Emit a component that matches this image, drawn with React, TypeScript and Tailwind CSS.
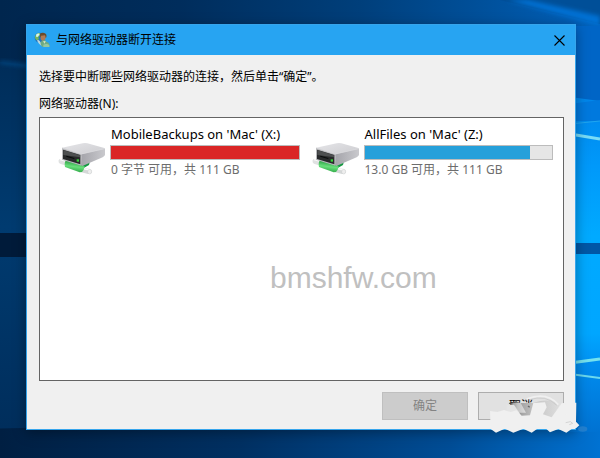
import { useState } from 'react';

interface Drive {
  name: string;
  info: string;
  used: number;
  full: boolean;
}

const drives: Drive[] = [
  { name: "MobileBackups on 'Mac' (X:)", info: '0 字节 可用，共 111 GB', used: 100, full: true },
  { name: "AllFiles on 'Mac' (Z:)", info: '13.0 GB 可用，共 111 GB', used: 88, full: false },
];

const Wallpaper = () => (
  <svg
    className="absolute inset-0 h-full w-full"
    viewBox="0 0 600 458"
    preserveAspectRatio="none"
    aria-hidden="true"
  >
    <defs>
      <linearGradient id="sky" x1="0" x2="1" y1="0" y2="0">
        <stop offset="0" stopColor="#00264e" />
        <stop offset="0.3" stopColor="#002d5c" />
        <stop offset="0.6" stopColor="#003f7b" />
        <stop offset="0.85" stopColor="#0054a2" />
        <stop offset="1" stopColor="#0062bd" />
      </linearGradient>
      <linearGradient id="ground" x1="0" x2="1" y1="0" y2="0">
        <stop offset="0" stopColor="#001f42" />
        <stop offset="0.4" stopColor="#003062" />
        <stop offset="0.75" stopColor="#004d96" />
        <stop offset="1" stopColor="#0072d2" />
      </linearGradient>
      <linearGradient id="left" x1="0" x2="0" y1="0" y2="1">
        <stop offset="0" stopColor="#002d59" />
        <stop offset="0.45" stopColor="#003b70" />
        <stop offset="1" stopColor="#002e5c" />
      </linearGradient>
      <linearGradient id="right" x1="0" x2="0" y1="0" y2="1">
        <stop offset="0" stopColor="#0086ea" />
        <stop offset="0.25" stopColor="#0099fa" />
        <stop offset="0.5" stopColor="#00aaff" />
        <stop offset="0.85" stopColor="#00a6ff" />
        <stop offset="1" stopColor="#008bef" />
      </linearGradient>
      <linearGradient id="corner" x1="0" x2="0" y1="0" y2="1">
        <stop offset="0" stopColor="#008ff1" />
        <stop offset="1" stopColor="#0072d2" />
      </linearGradient>
      <filter id="soft" x="-20%" y="-50%" width="140%" height="200%">
        <feGaussianBlur stdDeviation="2" />
      </filter>
    </defs>
    <rect width="600" height="458" fill="url(#sky)" />
    <path d="M500 0 L600 0 L600 24 Z" fill="#004f98" />
    <path d="M508 0 L528 0 L600 16 L600 26 Z" fill="#0071d4" filter="url(#soft)" />
    <path d="M0 62 L60 68 V428 H0 Z" fill="url(#left)" />
    <path d="M0 62 L60 70" stroke="#07569a" strokeWidth="2" filter="url(#soft)" />
    <path d="M570 26 H600 V110 H570 Z" fill="#0065c6" />
    <path d="M570 97 L600 101 V375 L570 370 Z" fill="url(#right)" />
    <path d="M570 104 L600 100 V121 H570 Z" fill="#0079de" />
    <path d="M570 124 L600 121" stroke="#20a5ef" />
    <path d="M570 134 L600 139" stroke="#78dcf7" strokeWidth="3" />
    <rect y="233" width="60" height="24" fill="#001b3a" />
    <rect x="550" y="243" width="50" height="11" fill="#0057a6" />
    <path d="M0 429 L150 422 H600 V458 H0 Z" fill="url(#ground)" />
    <path d="M570 364 L600 359 V432 H570 Z" fill="url(#corner)" />
    <path d="M570 363 L600 359" stroke="#75e2ee" strokeWidth="3" />
    <path d="M570 374 L600 378" stroke="#6cd9ee" strokeWidth="2" />
  </svg>
);

const NetworkUserIcon = () => (
  <svg className="h-4 w-4" viewBox="0 0 48 48" aria-hidden="true">
    <circle cx="17" cy="17" r="15" fill="#2475bb" />
    <path d="M3 14 C5 6 11 2 17 3 L20 9 L13 15 L15 22 L9 25 C5 23 3 19 3 14 Z" fill="#77b85d" />
    <path d="M6 8 C10 4 14 4 17 6 L12 14 L7 15 Z" fill="#d9f3ed" />
    <path d="M13 24 C20 27 20 36 28 38 L25 42 C16 39 12 32 9 25 Z" fill="#b9d7df" />
    <path d="M18 12 C16 3 24 0 30 3 C38 4 39 12 36 18 L31 15 L20 17 Z" fill="#6b4b2c" />
    <path d="M21 11 L33 10 C37 18 33 27 27 27 C21 26 18 20 21 11 Z" fill="#b07a55" />
    <path d="M20 30 L26 25 L34 25 L37 29 C45 31 47 36 47 45 H27 C21 43 19 37 20 30 Z" fill="#6eaa83" />
    <path d="M27 28 L32 35 L35 27 Z" fill="#d5e6c6" />
    <path d="M28 38 C34 35 43 36 46 40 V45 H28 Z" fill="#94c7a0" />
  </svg>
);

const DriveIcon = () => (
  <svg className="mb-[3px] h-[34px] w-12 shrink-0" viewBox="54 66 144 102" aria-hidden="true">
    <defs>
      <linearGradient id="lid" x1="0" x2="1" y1="0" y2="1">
        <stop offset="0" stopColor="#e5e5e8" />
        <stop offset="1" stopColor="#cbcbcf" />
      </linearGradient>
      <linearGradient id="side" x1="0" x2="1" y1="0" y2="0">
        <stop offset="0" stopColor="#a4a4aa" />
        <stop offset="1" stopColor="#c9c9cd" />
      </linearGradient>
      <linearGradient id="pipe" x1="0.2" x2="0" y1="0" y2="1">
        <stop offset="0" stopColor="#279840" />
        <stop offset="0.45" stopColor="#68df7b" />
        <stop offset="1" stopColor="#229a3b" />
      </linearGradient>
    </defs>
    <path d="M118 134 L150 124 L147 135 L130 145 Z" fill="#159842" />
    <path d="M59 117 Q54 119 56 127 Q57 131 62 132 L82 138 L86 123 Z" fill="#dfe1e1" />
    <path d="M60 119 L83 125" stroke="#fafafa" strokeWidth="4" />
    <path d="M124 143 L150 147 Q157 151 155 158 Q151 163 144 162 L121 156 Z" fill="#d5d8d8" />
    <path d="M128 146 L149 150" stroke="#fafafa" strokeWidth="4" />
    <ellipse cx="149" cy="155" rx="6" ry="7" fill="#eeeeee" stroke="#bfc1c1" />
    <path d="M78 121 Q72 128 75 141 L119 157 Q128 157 131 149 L134 138 L120 133 Z" fill="url(#pipe)" />
    <path d="M66 83 L128 70 Q135 68 142 70 L193 84 Q196 86 195 88 L124 108 Q97 99 67 88 Z" fill="url(#lid)" />
    <path d="M124 103 L195 86 V105 Q194 108 188 112 L127 138 L123 134 Z" fill="url(#side)" />
    <path d="M66 83 L124 102 V137 L120 136 L66 119 Z" fill="#b9babd" />
    <path d="M69 89 L121 105 V133 L69 117 Z" fill="#282a2b" />
    <path d="M70 90 L120 106 V112 L70 105 Z" fill="#4d4f50" />
    <path d="M79 107 L103 114 V117 L79 110 Z" fill="#090b0b" />
    <rect x="110" y="118" width="7" height="7" fill="#36d439" />
    <path d="M67 84 L124 102 L194 86" fill="none" stroke="#dddddf" strokeWidth="2" />
  </svg>
);

const DriveItem = ({ drive }: { drive: Drive }) => (
  <li className="flex items-end gap-1">
    <DriveIcon />
    <div className="min-w-0 flex-1">
      <div className="mb-0.5 h-[18px] truncate pl-px text-[13px] leading-[18px]">{drive.name}</div>
      <div className="h-[15px] border border-[#bcbcbc] bg-[#e6e6e6]">
        <div
          className={drive.full ? 'h-full bg-[#da2626]' : 'h-full bg-[#26a0da]'}
          style={{ width: `${drive.used}%` }}
        />
      </div>
      <div className="mt-px h-[18px] truncate pl-px text-xs leading-[18px] text-[#6d6d6d]">{drive.info}</div>
    </div>
  </li>
);

const Smudge = () => (
  <svg
    className="pointer-events-none absolute -right-[15px] -bottom-2 h-[43px] w-[103px]"
    viewBox="351 42 309 129"
    aria-hidden="true"
  >
    <defs>
      <filter id="smear" x="-10%" y="-10%" width="120%" height="120%">
        <feGaussianBlur stdDeviation="2" />
      </filter>
      <linearGradient id="shade" x1="0" x2="1" y1="0" y2="0">
        <stop offset="0" stopColor="#292929" />
        <stop offset="0.25" stopColor="#a2a2a2" />
        <stop offset="0.5" stopColor="#c4c4c4" />
        <stop offset="1" stopColor="#dddddd" />
      </linearGradient>
    </defs>
    <path d="M416 69 L438 64 L452 69 L490 69 Q540 52 567 75 L563 111 H455 L436 84 Z" fill="url(#shade)" filter="url(#smear)" />
    <path d="M418 69 H452 L468 98 H440 L436 84 Z" fill="url(#shade)" />
    <path d="M418 74 L432 74 L448 98 L448 108 H410 V74 Z" fill="#e4e4e4" filter="url(#smear)" />
    <path d="M470 57 Q530 34 565 74" fill="none" stroke="#f0f0f0" strokeWidth="5" />
    <path d="M476 60 Q528 42 560 76" fill="none" stroke="#c4c4c4" strokeWidth="2" />
    <path
      d="M360 93 L382 96 L402 90 L422 96 L440 91 L455 107 L480 106 L490 69 L525 67 L530 82 L519 103 L545 112 L575 70 L588 68 L586 102 L607 111 L609 68 L619 68 L618 125 L628 136 L618 145 L605 147 L589 158 L565 147 L540 157 L517 136 L485 158 L460 146 L430 158 L404 146 L378 158 L362 147 Z"
      fill="#f0f0f0"
      filter="url(#smear)"
    />
    <path d="M587 128 L601 125 L608 130 L598 134" fill="none" stroke="#c5c5c5" strokeWidth="2" />
    <path d="M474 78 L479 82" stroke="#666666" strokeWidth="4" />
    <ellipse cx="638" cy="147" rx="14" ry="8" fill="#428bcb" opacity="0.5" filter="url(#smear)" />
  </svg>
);

const App = () => {
  const [open, setOpen] = useState(true);

  return (
    <div className="relative flex min-h-screen flex-col overflow-hidden bg-[#002d5c] pt-6 pr-6 pb-7 pl-[26px] font-['Noto_Sans','Noto_Sans_CJK_SC',sans-serif] text-xs text-black">
      <Wallpaper />
      {open && (
        <div
          role="dialog"
          aria-labelledby="dialog-title"
          className="relative flex flex-1 flex-col border border-[#36a5ec] bg-[#f0f0f0] shadow-[0_3px_12px_rgba(0,0,0,0.35)]"
        >
          <header className="flex h-[30px] items-center gap-1.5 bg-[#27a4f2] pl-[7px]">
            <NetworkUserIcon />
            <h1 id="dialog-title" className="flex-1 text-xs">与网络驱动器断开连接</h1>
            <button
              type="button"
              aria-label="关闭"
              className="flex h-full w-[31px] items-center justify-center"
              onClick={() => setOpen(false)}
            >
              <svg className="h-[11px] w-[11px]" viewBox="0 0 11 11" aria-hidden="true">
                <path d="M0.5 0.5 L10.5 10.5 M10.5 0.5 L0.5 10.5" stroke="#000" strokeWidth="1.1" />
              </svg>
            </button>
          </header>

          <main className="flex flex-1 flex-col pt-[13px] pr-[11px] pb-[9px] pl-3">
            <p className="h-[18px] leading-[18px]">选择要中断哪些网络驱动器的连接，然后单击“确定”。</p>
            <h2 id="drives-label" className="mt-[9px] h-[18px] leading-[18px]">网络驱动器(N):</h2>

            <div className="relative mt-1 flex-1 border border-[#646464] bg-white pt-[7px] pr-2.5 pl-[18px]">
              <ul aria-labelledby="drives-label" className="grid grid-cols-2 gap-3">
                {drives.map((drive) => (
                  <DriveItem key={drive.name} drive={drive} />
                ))}
              </ul>
              <div className="pointer-events-none absolute top-[142px] left-[230px] text-3xl leading-9 text-[#c0c0c0] font-['Liberation_Sans',sans-serif]">
                bmshfw.com
              </div>
            </div>

            <footer className="mt-[11px] flex justify-end gap-2.5">
              <button
                type="button"
                disabled
                className="h-7 w-[86px] border border-[#bfbfbf] bg-[#cccccc] text-[#838383]"
              >
                确定
              </button>
              <button
                type="button"
                className="h-7 w-[86px] border border-[#adadad] bg-[#e1e1e1]"
                onClick={() => setOpen(false)}
              >
                取消
              </button>
            </footer>
          </main>
          <Smudge />
        </div>
      )}
    </div>
  );
};

export default App;
